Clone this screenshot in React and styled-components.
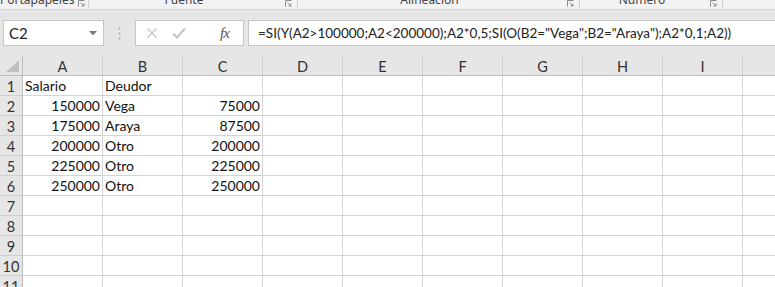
import React from "react";
import styled, { createGlobalStyle } from "styled-components";

const Global = createGlobalStyle`
  html, body { margin: 0; padding: 0; background: #ffffff; overflow: hidden; }
  #root { width: 775px; height: 287px; overflow: hidden; }
`;

const Page = styled.div`
  width: 775px;
  height: 287px;
  overflow: hidden;
  display: flex;
  flex-direction: column;
  font-family: Lato, "Open Sans", sans-serif;
`;

const RibbonStrip = styled.div`
  height: 9px;
  flex: none;
  background: #f3f3f3;
  border-bottom: 1px solid #d6d6d6;
  display: flex;
  overflow: hidden;
`;

const Group = styled.div`
  width: ${(p) => p.$w}px;
  flex: none;
  display: flex;
  border-right: 1px solid #d2d2d2;
  height: 8px;
`;

const GroupLabel = styled.div`
  flex: 1;
  text-align: center;
  font-family: "Noto Sans", "Open Sans", sans-serif;
  font-size: 12px;
  line-height: 12px;
  color: #444;
  margin-top: -6px;
  white-space: nowrap;
`;

const Launcher = styled.div`
  width: 18px;
  display: flex;
  justify-content: center;
  align-items: flex-end;
  padding-bottom: 1px;
`;

const FormulaArea = styled.div`
  flex: none;
  background: #e6e6e6;
  height: 46px;
  display: flex;
  align-items: flex-start;
  padding: 10px 0 0 3px;
  box-sizing: border-box;
`;

const NameBox = styled.div`
  width: 101px;
  height: 26px;
  box-sizing: border-box;
  background: #fff;
  border: 1px solid #c6c6c6;
  display: flex;
  align-items: center;
  justify-content: space-between;
  padding: 0 6px 0 5px;
  font-size: 15px;
  color: #222;
`;

const Dots = styled.div`
  width: 31px;
  height: 26px;
  display: flex;
  justify-content: center;
  align-items: center;
`;

const ButtonsBox = styled.div`
  width: 109px;
  height: 26px;
  box-sizing: border-box;
  background: #fff;
  border: 1px solid #c6c6c6;
  display: flex;
  align-items: center;
  padding-left: 10px;
  gap: 14px;
`;

const FxButton = styled.span`
  margin-left: 20px;
  font-family: "Liberation Serif", serif;
  font-style: italic;
  font-size: 15px;
  color: #555;
  letter-spacing: -1px;
`;

const FormulaInput = styled.div`
  flex: 1;
  margin-left: 4px;
  height: 26px;
  box-sizing: border-box;
  background: #fff;
  border: 1px solid #c6c6c6;
  border-right: none;
  display: flex;
  align-items: center;
  padding-left: 9px;
  font-size: 13.5px;
  color: #222;
  white-space: nowrap;
`;

const Sheet = styled.div`
  display: grid;
  grid-template-columns: 23px repeat(10, 80px);
  grid-auto-rows: 20px;
  flex: none;
`;

const Corner = styled.div`
  background: #e6e6e6;
  box-sizing: border-box;
  border-right: 1px solid #bdbdbd;
  border-bottom: 1px solid #bdbdbd;
  display: flex;
  align-items: flex-end;
  justify-content: flex-end;
  padding: 0 3px 3px 0;
`;

const ColHead = styled.div`
  background: #e6e6e6;
  box-sizing: border-box;
  border-right: 1px solid #cfcfcf;
  border-bottom: 1px solid #bdbdbd;
  display: flex;
  align-items: center;
  justify-content: center;
  font-size: 14.5px;
  color: #333;
  padding-top: 1px;
`;

const RowHead = styled.div`
  background: #e6e6e6;
  box-sizing: border-box;
  border-right: 1px solid #bdbdbd;
  border-bottom: 1px solid #cfcfcf;
  display: flex;
  align-items: center;
  justify-content: center;
  font-size: 14.5px;
  color: #333;
  padding-top: 1px;
`;

const Cell = styled.div`
  box-sizing: border-box;
  border-right: 1px solid #d4d4d4;
  border-bottom: 1px solid #d4d4d4;
  display: flex;
  align-items: flex-end;
  justify-content: ${(p) => (p.$num ? "flex-end" : "flex-start")};
  padding: 0 2px 1px 2px;
  font-size: 14px;
  color: #111;
  white-space: nowrap;
  overflow: visible;
`;

const LauncherIcon = () => (
  <svg width="7" height="7" viewBox="0 0 7 7">
    <path d="M0.5 6.5V0.5H6.5" fill="none" stroke="#8a8a8a" strokeWidth="1" />
    <path d="M2.5 2.5L6 6M6 3.5V6H3.5" fill="none" stroke="#8a8a8a" strokeWidth="1" />
  </svg>
);

const groups = [
  { label: "Portapapeles", w: 88 },
  { label: "Fuente", w: 208 },
  { label: "Alineación", w: 281 },
  { label: "Número", w: 142 },
  { label: "", w: 120 },
];

const cols = ["A", "B", "C", "D", "E", "F", "G", "H", "I", ""];

const data = [
  ["Salario", "Deudor", ""],
  [150000, "Vega", 75000],
  [175000, "Araya", 87500],
  [200000, "Otro", 200000],
  [225000, "Otro", 225000],
  [250000, "Otro", 250000],
];

export default function App() {
  const rows = [];
  for (let r = 1; r <= 11; r++) {
    const vals = data[r - 1] || [];
    rows.push(<RowHead key={`h${r}`}>{r}</RowHead>);
    cols.forEach((c, ci) => {
      const v = vals[ci];
      rows.push(
        <Cell key={`${r}-${ci}`} $num={typeof v === "number"}>
          {v !== undefined ? v : ""}
        </Cell>
      );
    });
  }
  return (
    <Page>
      <Global />
      <RibbonStrip>
        {groups.map((g, i) => (
          <Group key={i} $w={g.w}>
            <GroupLabel>{g.label}</GroupLabel>
            <Launcher>{g.label && <LauncherIcon />}</Launcher>
          </Group>
        ))}
      </RibbonStrip>
      <FormulaArea>
        <NameBox>
          <span>C2</span>
          <svg width="8" height="5" viewBox="0 0 8 5">
            <path d="M0 0H8L4 4.5Z" fill="#7a7a7a" />
          </svg>
        </NameBox>
        <Dots>
          <svg width="3" height="13" viewBox="0 0 3 13">
            <circle cx="1.5" cy="1.5" r="1" fill="#a8a8a8" />
            <circle cx="1.5" cy="6.5" r="1" fill="#a8a8a8" />
            <circle cx="1.5" cy="11.5" r="1" fill="#a8a8a8" />
          </svg>
        </Dots>
        <ButtonsBox>
          <svg width="12" height="12" viewBox="0 0 12 12">
            <path d="M1.5 1.5L10.5 10.5M10.5 1.5L1.5 10.5" stroke="#c4c4c4" strokeWidth="1.4" fill="none" />
          </svg>
          <svg width="14" height="12" viewBox="0 0 14 12">
            <path d="M1 6.5L5 10.5L13 1.5" stroke="#c4c4c4" strokeWidth="2" fill="none" />
          </svg>
          <FxButton>fx</FxButton>
        </ButtonsBox>
        <FormulaInput>
          =SI(Y(A2&gt;100000;A2&lt;200000);A2*0,5;SI(O(B2="Vega";B2="Araya");A2*0,1;A2))
        </FormulaInput>
      </FormulaArea>
      <Sheet>
        <Corner>
          <svg width="13" height="12" viewBox="0 0 13 12">
            <path d="M13 0V12H0Z" fill="#bfbfbf" />
          </svg>
        </Corner>
        {cols.map((c, i) => (
          <ColHead key={i}>{c}</ColHead>
        ))}
        {rows}
      </Sheet>
    </Page>
  );
}
